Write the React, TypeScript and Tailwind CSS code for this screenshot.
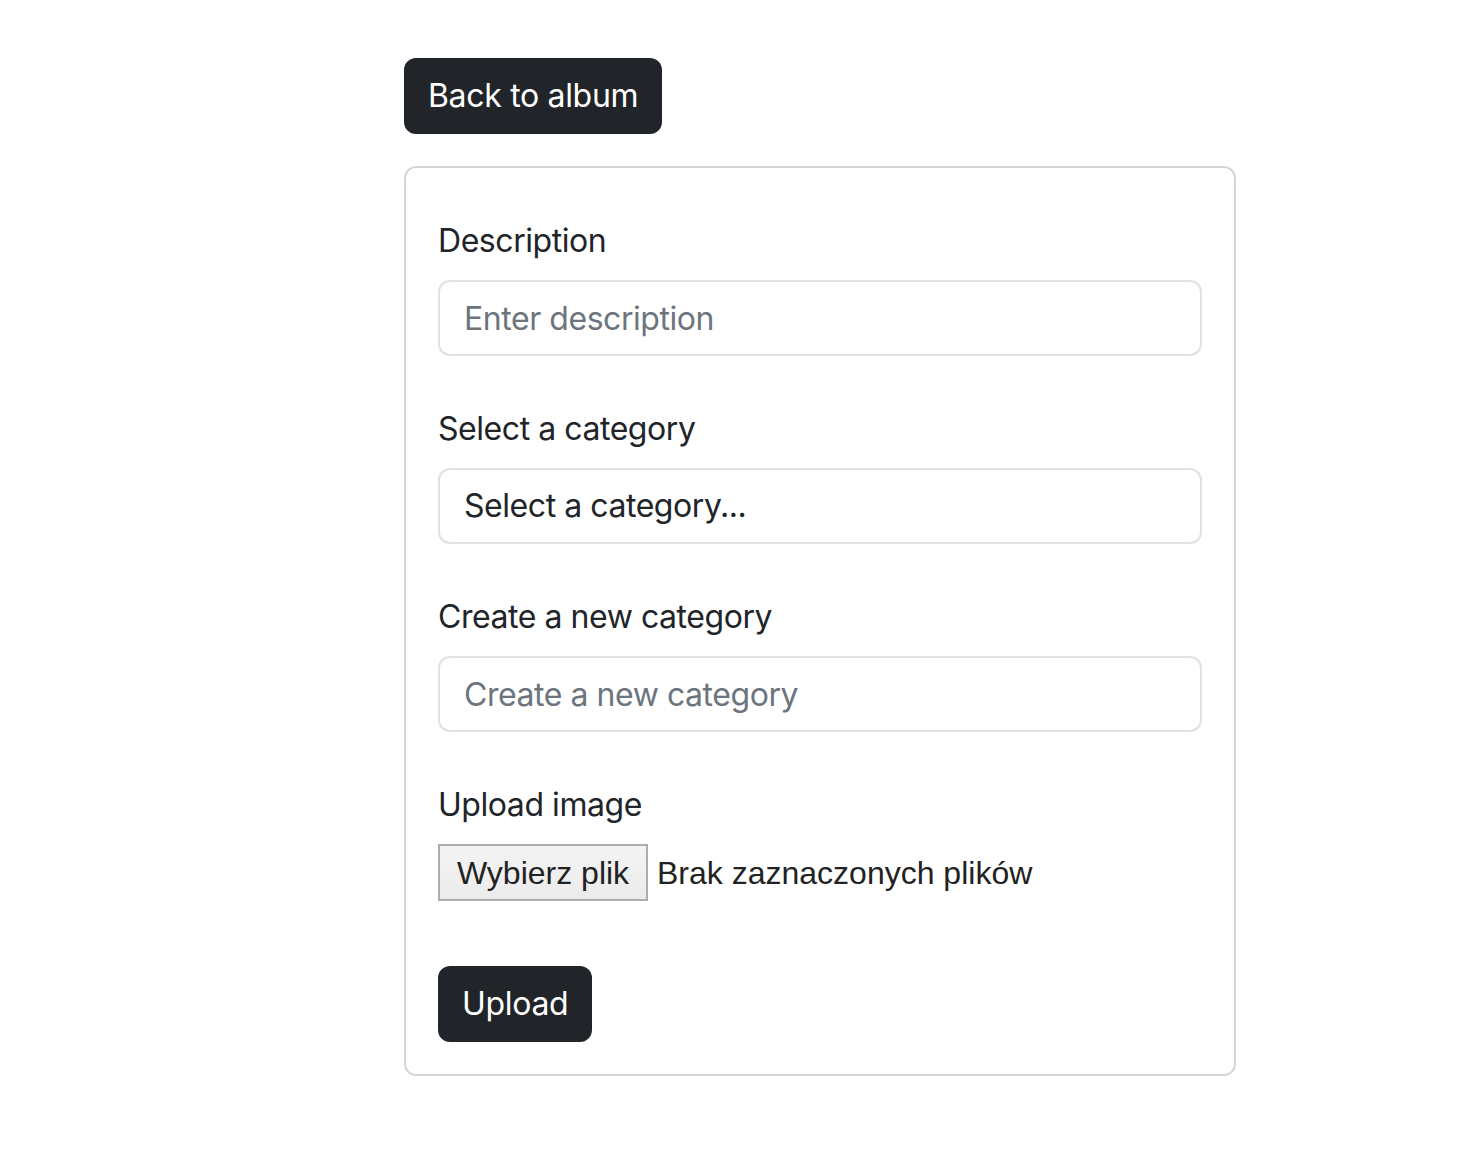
const font = { fontFamily: "Inter, 'Noto Sans', sans-serif" };
const fileFont = { fontFamily: "'Liberation Sans', Arial, sans-serif" };

function Label({ children }: { children: React.ReactNode }) {
  return (
    <label className="mb-[15px] block text-[32px] leading-[48px] tracking-[-0.014em] text-[#212529]">
      {children}
    </label>
  );
}

function TextInput({ placeholder }: { placeholder: string }) {
  return (
    <input
      type="text"
      placeholder={placeholder}
      className="block h-[76px] w-full rounded-xl border-2 border-[#dee2e6] bg-white px-6 text-[32px] tracking-[-0.014em] text-[#212529] outline-none placeholder:text-[#6c757d]"
    />
  );
}

function DarkButton({ children }: { children: React.ReactNode }) {
  return (
    <button className="h-[76px] rounded-xl bg-[#212529] px-6 text-[32px] leading-[48px] tracking-[-0.01em] text-white">
      {children}
    </button>
  );
}

export default function App() {
  return (
    <div className="min-h-[1166px] bg-white pl-[404px] pt-[58px]" style={font}>
      <DarkButton>Back to album</DarkButton>

      <div className="mt-8 w-[832px] rounded-xl border-2 border-[#d6d6d6] px-8 pb-8 pt-[49px]">
        <div className="mb-[49px]">
          <Label>Description</Label>
          <TextInput placeholder="Enter description" />
        </div>

        <div className="mb-[49px]">
          <Label>Select a category</Label>
          <div className="flex h-[76px] w-full items-center rounded-xl border-2 border-[#dee2e6] px-6 text-[32px] tracking-[-0.014em] text-[#212529]">
            Select a category...
          </div>
        </div>

        <div className="mb-[49px]">
          <Label>Create a new category</Label>
          <TextInput placeholder="Create a new category" />
        </div>

        <div className="mb-[65px]">
          <Label>Upload image</Label>
          <div className="flex items-center" style={fileFont}>
            <span className="flex h-[57px] w-[210px] items-center justify-center border-2 border-[#adadad] bg-gradient-to-b from-[#f4f4f4] to-[#ebebeb] text-[32px] text-[#222]">
              Wybierz plik
            </span>
            <span className="ml-[9px] text-[32px] text-[#222]">
              Brak zaznaczonych plików
            </span>
          </div>
        </div>

        <DarkButton>Upload</DarkButton>
      </div>
    </div>
  );
}
